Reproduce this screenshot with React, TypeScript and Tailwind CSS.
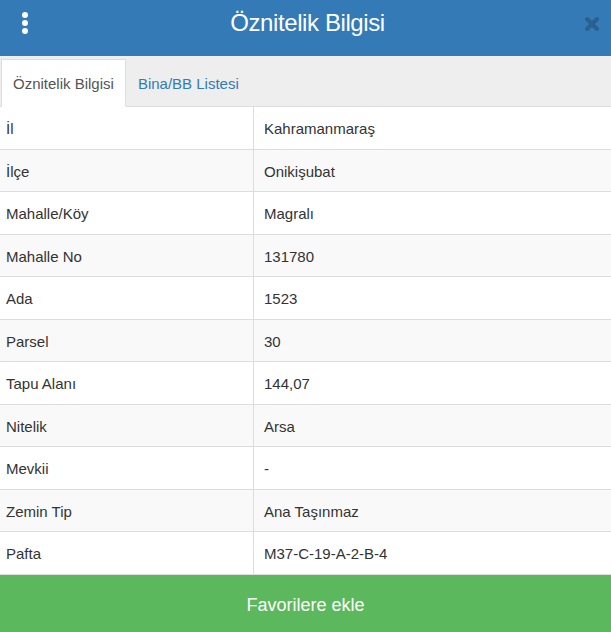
import { useState } from 'react'

const ROWS: [string, string][] = [
  ['İl', 'Kahramanmaraş'],
  ['İlçe', 'Onikişubat'],
  ['Mahalle/Köy', 'Magralı'],
  ['Mahalle No', '131780'],
  ['Ada', '1523'],
  ['Parsel', '30'],
  ['Tapu Alanı', '144,07'],
  ['Nitelik', 'Arsa'],
  ['Mevkii', '-'],
  ['Zemin Tip', 'Ana Taşınmaz'],
  ['Pafta', 'M37-C-19-A-2-B-4'],
]

const TABS = ['Öznitelik Bilgisi', 'Bina/BB Listesi']

export default function App() {
  const [tab, setTab] = useState(0)

  return (
    <div className="w-[611px] h-[632px] flex flex-col bg-white font-['Liberation_Sans',Arial,sans-serif] overflow-hidden">
      {/* header */}
      <div className="h-14 shrink-0 bg-[#337ab7] flex items-start pt-[9px] px-5 relative">
        <div className="flex flex-col gap-[2px] items-center w-2.5 pt-[3px]">
          <span className="h-[6px] w-[6px] rounded-full bg-white" />
          <span className="h-[6px] w-[6px] rounded-full bg-white" />
          <span className="h-[6px] w-[6px] rounded-full bg-white" />
        </div>
        <h1 className="flex-1 text-center text-white text-[24px] leading-[28px] tracking-[-0.4px] pr-[6px]">Öznitelik Bilgisi</h1>
        <svg width="16" height="16" viewBox="0 0 16 16" className="absolute right-[11px] top-[16px]">
          <path d="M3 3 L13 13 M13 3 L3 13" stroke="#2a5f8f" strokeWidth="4" strokeLinecap="round" />
        </svg>
      </div>

      {/* tabs */}
      <div className="h-[51px] shrink-0 bg-[#eeeeee] flex items-end pl-px border-b border-[#dddddd]">
        {TABS.map((t, i) => (
          <button
            key={t}
            onClick={() => setTab(i)}
            className={`h-12 px-[11px] pt-[2px] text-[15px] -mb-px ${
              i === tab
                ? 'bg-white text-[#555555] border border-[#dddddd] border-b-white'
                : 'text-[#337ab7] border border-transparent'
            }`}
          >
            {t}
          </button>
        ))}
      </div>

      {/* attribute table */}
      <div className="flex-1">
        {ROWS.map(([k, v], i) => (
          <div
            key={k}
            className={`h-[42.5px] grid grid-cols-[254px_1fr] border-b border-[#dddddd] text-[15px] text-[#333333] ${
              i % 2 === 1 ? 'bg-[#f9f9f9]' : 'bg-white'
            }`}
          >
            <div className="flex items-center pl-[6px] pt-[3px] border-r border-[#dddddd]">{k}</div>
            <div className="flex items-center pl-[10px] pt-[3px]">{v}</div>
          </div>
        ))}
      </div>

      <button className="h-[58px] shrink-0 bg-[#5cb85c] text-white text-[18px] pt-[4px]">Favorilere ekle</button>
    </div>
  )
}
